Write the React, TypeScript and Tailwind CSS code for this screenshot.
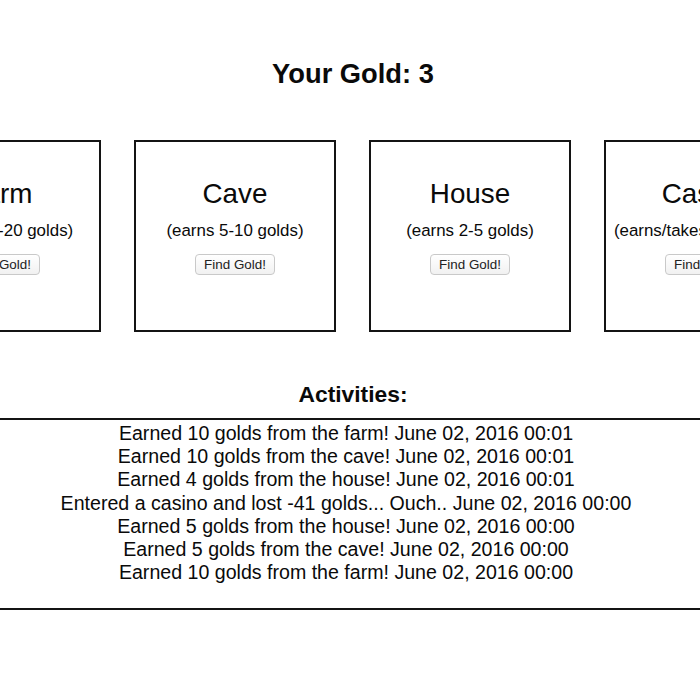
import React from "react";

const places = [
  { name: "Farm", desc: "(earns 10-20 golds)" },
  { name: "Cave", desc: "(earns 5-10 golds)" },
  { name: "House", desc: "(earns 2-5 golds)" },
  { name: "Casino", desc: "(earns/takes 0-50 golds)" },
];

const activities = [
  "Earned 10 golds from the farm! June 02, 2016 00:01",
  "Earned 10 golds from the cave! June 02, 2016 00:01",
  "Earned 4 golds from the house! June 02, 2016 00:01",
  "Entered a casino and lost -41 golds... Ouch.. June 02, 2016 00:00",
  "Earned 5 golds from the house! June 02, 2016 00:00",
  "Earned 5 golds from the cave! June 02, 2016 00:00",
  "Earned 10 golds from the farm! June 02, 2016 00:00",
];

export default function App() {
  return (
    <div className="w-[700px] h-[700px] overflow-hidden bg-white text-[#0a0a0a] font-['Liberation_Sans',Arial,sans-serif]">
      <h1 className="pt-[58px] pl-[6px] text-center text-[27.3px] leading-[32px] font-bold">
        Your Gold: 3
      </h1>
      <div className="mt-[50px] flex w-max gap-[33px] ml-[-101px]">
        {places.map((p) => (
          <div
            key={p.name}
            className="w-[202px] h-[192px] shrink-0 border-2 border-[#141414] flex flex-col items-center pt-[36px]"
          >
            <div className="text-[27.8px] leading-[32px] whitespace-nowrap">{p.name}</div>
            <div className="mt-[11px] text-[16.9px] leading-[20px] whitespace-nowrap">{p.desc}</div>
            <button className="mt-[13px] w-[80px] h-[21px] rounded-[4px] border border-[#c9c9c9] bg-gradient-to-b from-white to-[#f1f1f1] text-[13.4px] leading-[19px] text-[#222] whitespace-nowrap">
              Find Gold!
            </button>
          </div>
        ))}
      </div>
      <h2 className="mt-[49px] pl-[6px] text-center text-[22.8px] leading-[27px] font-bold">
        Activities:
      </h2>
      <div className="mt-[10px] mx-[-10px] border-y-2 border-[#141414] pt-[2px] pb-[24px] pr-[8px] text-center">
        {activities.map((a, i) => (
          <div key={i} className="text-[19.6px] leading-[23.2px] whitespace-nowrap">
            {a}
          </div>
        ))}
      </div>
    </div>
  );
}
